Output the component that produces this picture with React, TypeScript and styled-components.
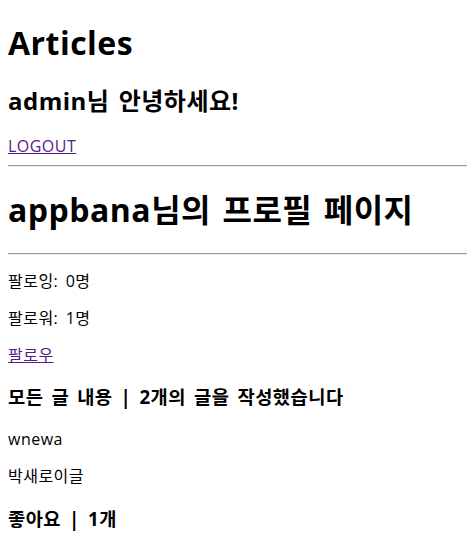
import React from 'react';
import styled, {createGlobalStyle} from 'styled-components';

const GlobalStyle = createGlobalStyle`
  body {
    margin: 0 8px 8px;
    font-family: "Open Sans", "Noto Sans CJK KR", sans-serif;
    font-size: 16px;
    line-height: 21px;
    letter-spacing: 0.03em;
    word-spacing: 0.17em;
    color: #000000;
    background: #FFFFFF;
  }
`;

const Page = styled.main`
  display: block;
`;

const Title = styled.h1`
  font-size: 32px;
  line-height: 43px;
  font-weight: bold;
  margin: 21.44px 0;
`;

const Greeting = styled.h2`
  font-size: 24px;
  line-height: 30px;
  font-weight: bold;
  margin: 19.92px 0;
`;

const SubTitle = styled.h3`
  font-size: 18.72px;
  line-height: 26px;
  font-weight: bold;
  margin: 18.72px 0;
`;

const Text = styled.p`
  margin: 16px 0;
`;

const Link = styled.a`
  color: #551A8B;
  text-decoration: underline;
  cursor: pointer;
`;

const Divider = styled.hr`
  border: none;
  border-top: 1px solid #9A9A9A;
  border-bottom: 1px solid #EEEEEE;
  margin: 8px 0;
`;

const App = (): JSX.Element => {
  return (
    <Page>
      <GlobalStyle/>
      <Title>Articles</Title>
      <Greeting>admin님 안녕하세요!</Greeting>
      <Link href={'#'}>LOGOUT</Link>
      <Divider/>
      <Title>appbana님의 프로필 페이지</Title>
      <Divider/>
      <Text>팔로잉: 0명</Text>
      <Text>팔로워: 1명</Text>
      <Link href={'#'}>팔로우</Link>
      <SubTitle>모든 글 내용 | 2개의 글을 작성했습니다</SubTitle>
      <Text>wnewa</Text>
      <Text>박새로이글</Text>
      <SubTitle>좋아요 | 1개</SubTitle>
    </Page>
  );
};

export default App;
